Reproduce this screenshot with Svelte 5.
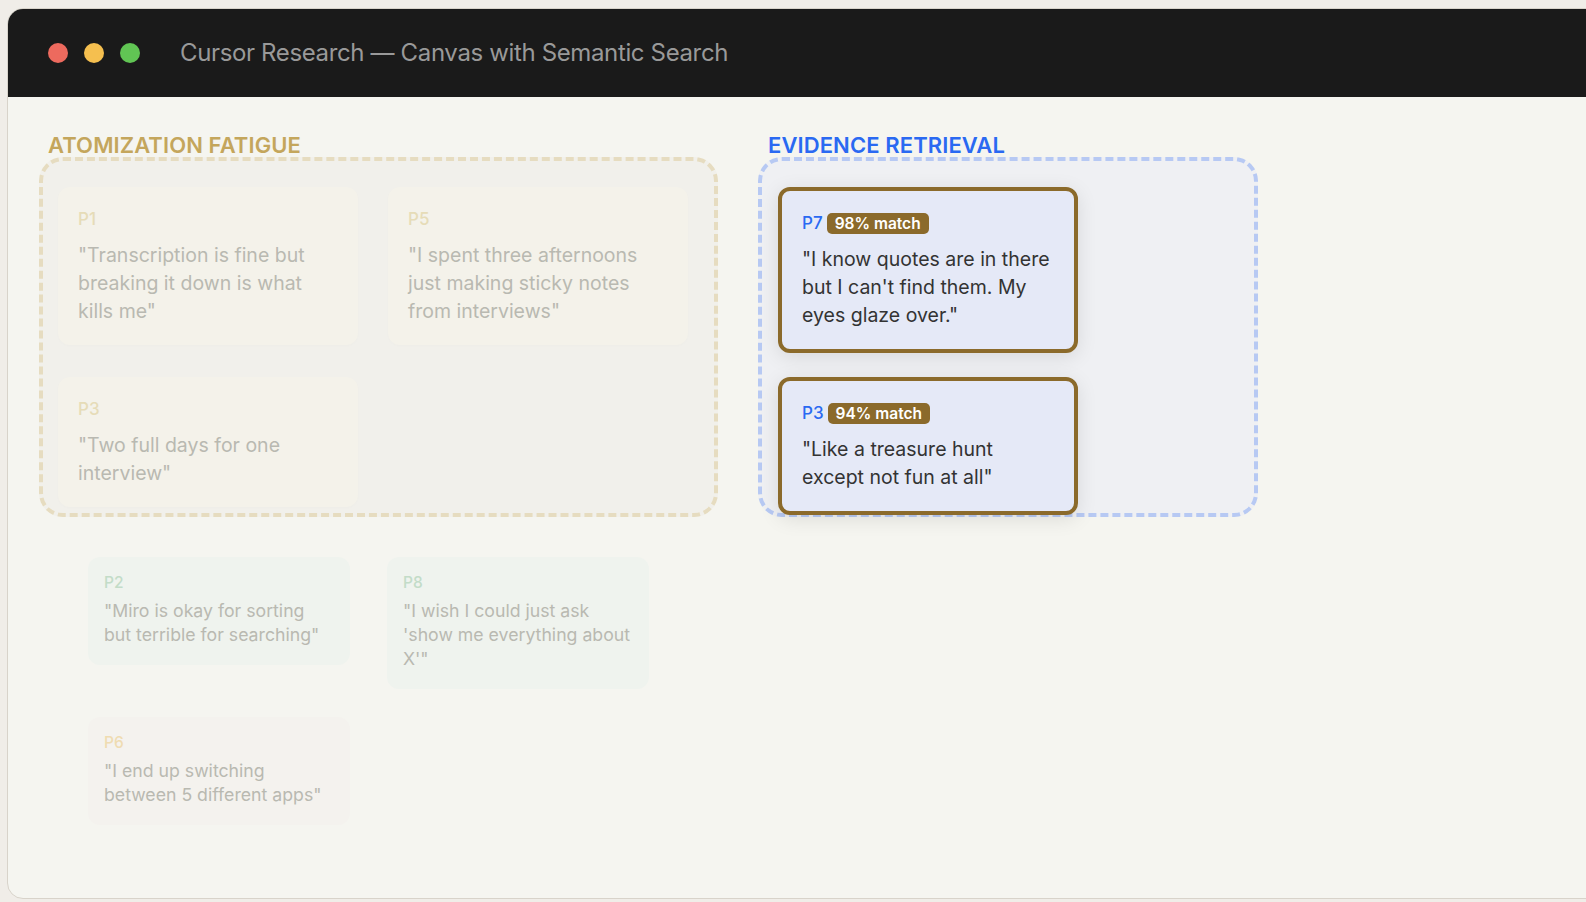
<script>
  const fatigue = [
    { id: 'P1', text: '"Transcription is fine but\nbreaking it down is what\nkills me"' },
    { id: 'P5', text: '"I spent three afternoons\njust making sticky notes\nfrom interviews"' },
    { id: 'P3', text: '"Two full days for one\ninterview"' }
  ];
  const evidence = [
    { id: 'P7', match: '98% match', text: '"I know quotes are in there\nbut I can\'t find them. My\neyes glaze over."' },
    { id: 'P3', match: '94% match', text: '"Like a treasure hunt\nexcept not fun at all"' }
  ];
  const loose = [
    { id: 'P2', tone: 'green', text: '"Miro is okay for sorting\nbut terrible for searching"' },
    { id: 'P8', tone: 'green', text: '"I wish I could just ask\n\'show me everything about\nX\'"' },
    { id: 'P6', tone: 'amber', text: '"I end up switching\nbetween 5 different apps"' }
  ];
</script>

<div class="window">
  <header class="titlebar">
    <div class="lights">
      <span class="light red"></span>
      <span class="light yellow"></span>
      <span class="light green"></span>
    </div>
    <div class="title">Cursor Research — Canvas with Semantic Search</div>
  </header>

  <main class="canvas">
    <div class="groups">
      <section class="col col-fatigue">
        <h2 class="label gold">ATOMIZATION FATIGUE</h2>
        <div class="group group-gold">
          {#each fatigue as c}
            <article class="note">
              <div class="pid">{c.id}</div>
              <p>{c.text}</p>
            </article>
          {/each}
        </div>
      </section>

      <section class="col col-evidence">
        <h2 class="label blue">EVIDENCE RETRIEVAL</h2>
        <div class="group group-blue">
          {#each evidence as c}
            <article class="hit">
              <div class="hit-head">
                <span class="hit-id">{c.id}</span>
                <span class="badge">{c.match}</span>
              </div>
              <p>{c.text}</p>
            </article>
          {/each}
        </div>
      </section>
    </div>

    <div class="loose">
      {#each loose as c}
        <article class="small {c.tone}">
          <div class="small-id">{c.id}</div>
          <p>{c.text}</p>
        </article>
      {/each}
    </div>
  </main>
</div>

<style>
  :global(html), :global(body) {
    margin: 0;
    height: 100%;
    overflow: hidden;
    background: #f0ede8;
  }
  .window {
    box-sizing: border-box;
    width: 1620px;
    height: 891px;
    margin: 8px 0 0 7px;
    border: 1px solid #d8d3ca;
    border-radius: 16px;
    overflow: hidden;
    background: #f5f5f0;
    font-family: Inter, "Liberation Sans", sans-serif;
  }
  .titlebar {
    height: 88px;
    display: flex;
    align-items: center;
    padding-left: 40px;
    background: #1a1a1a;
  }
  .lights { display: flex; gap: 16px; margin-right: 40px; }
  .light { width: 20px; height: 20px; border-radius: 50%; }
  .red { background: #ed6a5e; }
  .yellow { background: #f5bf4f; }
  .green { background: #61c554; }
  .title { color: #999; font-size: 24px; letter-spacing: -0.36px; padding-bottom: 2px; }

  .canvas { padding-left: 31px; }
  .groups { display: flex; gap: 40px; }
  .col { display: flex; flex-direction: column; }
  .label {
    height: 60px;
    margin: 0 0 0 9px;
    box-sizing: border-box;
    padding-top: 35px;
    font-size: 22px;
    line-height: 26px;
    font-weight: 600;
    letter-spacing: 0.1px;
    white-space: nowrap;
  }
  .gold { color: #c4a65c; }
  .blue { color: #2a69f2; margin-left: 10px; }

  .group {
    box-sizing: border-box;
    height: 360px;
    border-width: 4px;
    border-style: dashed;
    border-radius: 24px;
  }
  .group-gold {
    width: 679px;
    background: #f1f0eb;
    border-color: #e6dcc0;
    padding: 26px 15px 0;
    display: grid;
    grid-template-columns: 300px 300px;
    column-gap: 30px;
    row-gap: 32px;
    align-content: start;
  }
  .group-blue {
    width: 500px;
    background: #eff0f3;
    border-color: #b7c9f3;
    padding: 26px 16px 0;
    display: flex;
    flex-direction: column;
    gap: 24px;
    align-items: flex-start;
  }

  .note {
    box-sizing: border-box;
    padding: 20px;
    background: #f4f2ea;
    border-radius: 12px;
    box-shadow: 0 1px 3px rgba(0, 0, 0, 0.015);
  }
  .pid {
    height: 26px;
    margin-bottom: 8px;
    font-size: 17px;
    line-height: 24px;
    font-weight: 500;
    color: #e6dcb8;
  }
  p { margin: 0; white-space: pre; }
  .note p {
    font-size: 19.5px;
    line-height: 28px;
    color: #b9b9b1;
  }

  .hit {
    box-sizing: border-box;
    width: 300px;
    padding: 20px;
    background: #e5e9f7;
    border: 4px solid #8b6a2b;
    border-radius: 12px;
    box-shadow: 0 4px 20px rgba(0, 0, 0, 0.1);
  }
  .hit-head {
    height: 24px;
    margin-bottom: 10px;
    display: flex;
    align-items: center;
    gap: 4px;
  }
  .hit-id { font-size: 17px; font-weight: 500; color: #2a69f2; }
  .badge {
    padding: 0 8px;
    height: 21px;
    line-height: 21px;
    border-radius: 5px;
    background: #8b6a2b;
    color: #fff;
    font-size: 15.5px;
    font-weight: 600;
  }
  .hit p {
    font-size: 19.5px;
    line-height: 28px;
    color: #333;
  }

  .loose {
    display: grid;
    grid-template-columns: 262px 262px;
    column-gap: 37px;
    row-gap: 28px;
    align-items: start;
    margin: 40px 0 0 49px;
  }
  .small {
    box-sizing: border-box;
    padding: 16px 16px 18px;
    border-radius: 12px;
  }
  .small.green { background: #eff3ee; }
  .small.amber { background: #f4f2ee; }
  .small-id {
    height: 20px;
    margin-bottom: 6px;
    font-size: 15.5px;
    line-height: 20px;
    font-weight: 500;
  }
  .green .small-id { color: #c3dcc8; }
  .amber .small-id { color: #efdcb2; }
  .small p {
    font-size: 17.7px;
    line-height: 24px;
    color: #b9b9b1;
  }
</style>
